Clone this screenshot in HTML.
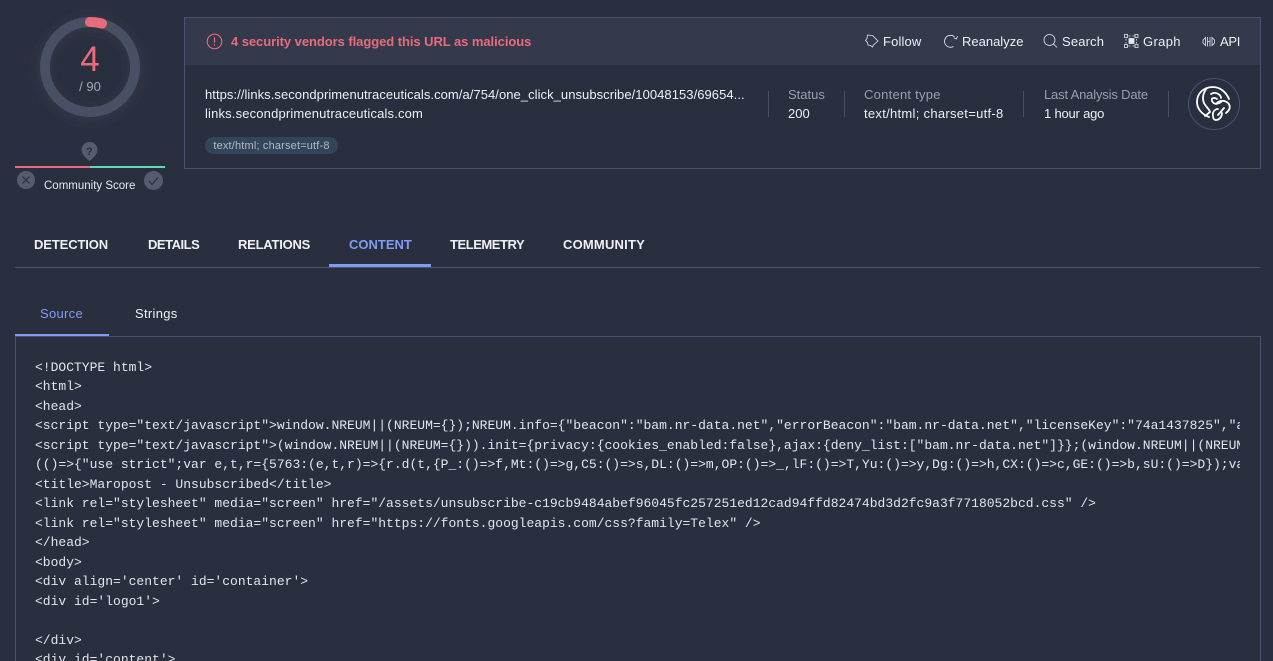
<!DOCTYPE html>
<html><head><meta charset="utf-8">
<style>
html,body{margin:0;padding:0;width:1273px;height:661px;overflow:hidden;background:#2a2f3f}
#w{position:relative;width:1273px;height:661px;overflow:hidden;background:#2a2f3f;font-family:"Liberation Sans",sans-serif;color:#f0f1f5}
.a{position:absolute;white-space:nowrap;line-height:16px}
svg{position:absolute;overflow:visible}
.code{position:absolute;left:35px;top:357.5px;width:1205px;height:304px;overflow:hidden;font:13px/19.5px "Liberation Mono",monospace;color:#e2e5eb;white-space:pre}
.tab{font-size:13px;font-weight:bold;top:237px;color:#eef0f4}
.act{font-size:13px;top:34px;color:#eef0f4}
.lab{font-size:13px;color:#9a9fae;top:87px}
.val{font-size:13px;color:#eef0f4;top:106px}
.div{position:absolute;top:91px;width:1px;height:26px;background:#4a5063}
</style></head><body><div id="w">
<!-- score -->
<svg style="left:0;top:0" width="200" height="200">
<defs><filter id="g" x="-30%" y="-30%" width="160%" height="160%"><feGaussianBlur stdDeviation="6"/></filter></defs>
<circle cx="90" cy="69" r="46" fill="none" stroke="#4a5063" stroke-opacity=".35" stroke-width="10" filter="url(#g)"/>
<circle cx="90" cy="67" r="45" fill="none" stroke="#4a5063" stroke-width="10"/>
<path d="M90 22 A45 45 0 0 1 102 23.500" fill="none" stroke="#e96b7c" stroke-width="10" stroke-linecap="round"/>
<path d="M89.500 142c-5 0-8 3.500-8 8 0 4 4 8 8 11 4-3 8-7 8-11 0-4.500-3-8-8-8z" fill="#565c6e"/>
<rect x="15" y="166" width="75" height="2" fill="#e96b7c"/><rect x="90" y="166" width="75" height="2" fill="#5fdcb4"/>
<circle cx="26" cy="180" r="9" fill="#565c6e"/><path d="M22.500 176.500l7 7m0-7l-7 7" stroke="#2a2f3f" stroke-width="1.200" fill="none"/>
<circle cx="153.500" cy="180.500" r="9.500" fill="#565c6e"/><path d="M149 181l3 3.500 6-7" stroke="#2a2f3f" stroke-width="1.200" fill="none"/>
</svg>
<div class="a" style="left:60px;top:40px;width:60px;text-align:center;font-size:35px;line-height:40px;color:#e96b7c">4</div>
<div class="a" style="left:60px;top:79px;width:60px;text-align:center;font-size:13px;color:#a5a9b6">/ 90</div>
<div class="a" style="left:86px;top:144px;font-size:11px;font-weight:bold;color:#2a2f3f">?</div>
<div class="a" style="left:44px;top:178px;font-size:11.500px;color:#e6e8ee">Community Score</div>
<!-- card -->
<div style="position:absolute;left:184px;top:17px;width:1075px;height:150px;border:1px solid #4b5272"></div>
<div style="position:absolute;left:185px;top:18px;width:1075px;height:47px;background:#343a4c"></div>
<svg style="left:206px;top:34px" width="17" height="17"><circle cx="8.500" cy="7.500" r="7.300" fill="none" stroke="#e96b7c" stroke-width="1.100"/><path d="M8.500 3.300v5.400M8.500 10.300v1.200" stroke="#e96b7c" stroke-width="1.200"/></svg>
<div class="a" style="left:231px;top:34px;font-size:13px;font-weight:bold;color:#e96b7c;letter-spacing:-.06px">4 security vendors flagged this URL as malicious</div>
<svg style="left:864px;top:33px" width="16" height="16" fill="none" stroke="#e6e8ee" stroke-width=".8"><path d="M3.500 2l5 .5 5.500 5.500-4.500 4-1 2-2-1.500-2.500-.5-.5-2.500-2-2 1.500-2z"/></svg>
<div class="a act" style="left:883px;letter-spacing:.15px">Follow</div>
<svg style="left:943px;top:33px" width="16" height="16" fill="none" stroke="#e6e8ee" stroke-width=".8"><path d="M10.500 13.500A6 6 0 1 1 11.500 3.800"/><path d="M14.500 3l-1 3-2.800-1.200"/></svg>
<div class="a act" style="left:962px">Reanalyze</div>
<svg style="left:1043px;top:33px" width="16" height="16" fill="none" stroke="#e6e8ee" stroke-width=".8"><circle cx="6.500" cy="7" r="5.500"/><path d="M10.500 11l3.500 3.500"/></svg>
<div class="a act" style="left:1062px;letter-spacing:.15px">Search</div>
<svg style="left:1124px;top:34px" width="16" height="16" fill="none" stroke="#e6e8ee" stroke-width=".8"><rect x=".5" y=".5" width="3" height="3"/><rect x="11" y=".5" width="3" height="3"/><rect x=".5" y="10.500" width="3" height="3"/><rect x="11" y="10.500" width="3" height="3"/><rect x="5" y="4.500" width="5" height="5" fill="#e6e8ee"/><path d="M4.500 2h2M8.500 2h2M4.500 12h2M8.500 12h2M2 5v1.500M2 8v1.500M12.500 5v1.500M12.500 8v1.500"/></svg>
<div class="a act" style="left:1143px;letter-spacing:.35px">Graph</div>
<svg style="left:1202px;top:36px" width="14" height="12" fill="none" stroke="#e6e8ee" stroke-width=".8"><path d="M3.500 1.500L1 4v3l2.500 2.500zM10 1.500L12.500 4v3L10 9.500zM5.500 1v9.500M8 1v9.500M5.500 5.500H8"/></svg>
<div class="a act" style="left:1220px;letter-spacing:-.3px">API</div>
<div class="a" style="left:205px;top:87px;font-size:13px;color:#eef0f4;letter-spacing:.055px">https://links.secondprimenutraceuticals.com/a/754/one_click_unsubscribe/10048153/69654...</div>
<div class="a" style="left:205px;top:106px;font-size:13px;color:#eef0f4;letter-spacing:.16px">links.secondprimenutraceuticals.com</div>
<div class="a" style="left:205px;top:137px;width:133px;height:17px;border-radius:9px;background:#33455a;font-size:11px;line-height:18px;text-align:center;color:#b4bac6;letter-spacing:.17px">text/html; charset=utf-8</div>
<div class="div" style="left:768px"></div><div class="div" style="left:844px"></div><div class="div" style="left:1023px"></div><div class="div" style="left:1168px"></div>
<div class="a lab" style="left:788px">Status</div><div class="a val" style="left:788px">200</div>
<div class="a lab" style="left:864px;letter-spacing:.25px">Content type</div><div class="a val" style="left:864px;letter-spacing:.29px">text/html; charset=utf-8</div>
<div class="a lab" style="left:1044px;letter-spacing:-.17px">Last Analysis Date</div><div class="a val" style="left:1044px;letter-spacing:-.2px">1 hour ago</div>
<svg style="left:1188px;top:78px" width="53" height="53" fill="none"><circle cx="26" cy="26" r="25.500" stroke="#4b5272"/>
<g stroke="#fff" stroke-width="1.800" stroke-linecap="round"><path d="M21 39C13 36 9 30 9 24C9 15 16 9 25 9C32 9 38 14 41 21"/><path d="M19 10C15 15 14 20 16 25C18 29 22 32 22 34L17 38"/><path d="M23 16C28 13 33 17 33 20M33 24C30 26 26 27 24 23C23 20 26 19 29 21"/><path d="M28 26C31 22 37 22 40 25C43 28 42 32 38 35"/><path d="M25 38C24 34 27 31 30 31M34 35C34 39 31 42 28 42C26 42 25 40 25 38"/><path d="M30 37L36 30"/></g></svg>
<!-- tabs -->
<div class="a tab" style="left:34px;letter-spacing:-.12px">DETECTION</div>
<div class="a tab" style="left:148px;letter-spacing:-.47px">DETAILS</div>
<div class="a tab" style="left:238px;letter-spacing:-.23px">RELATIONS</div>
<div class="a tab" style="left:349px;color:#7f9cf0">CONTENT</div>
<div class="a tab" style="left:450px;letter-spacing:-.45px">TELEMETRY</div>
<div class="a tab" style="left:563px;letter-spacing:.2px">COMMUNITY</div>
<div style="position:absolute;left:15px;top:267px;width:1245px;height:1px;background:#4b5272"></div>
<div style="position:absolute;left:329px;top:264px;width:102px;height:3px;background:#7f9cf0"></div>
<!-- subtabs -->
<div class="a" style="left:40px;top:306px;font-size:13px;color:#7f9cf0;letter-spacing:.3px">Source</div>
<div class="a" style="left:135px;top:306px;font-size:13px;color:#eef0f4;letter-spacing:.3px">Strings</div>
<div style="position:absolute;left:15px;top:336px;width:1244px;height:340px;border:1px solid #4b5272"></div>
<div style="position:absolute;left:15px;top:334px;width:94px;height:2px;background:#7f9cf0"></div>
<div class="code">&lt;!DOCTYPE html&gt;
&lt;html&gt;
&lt;head&gt;
&lt;script type="text/javascript"&gt;window.NREUM||(NREUM={});NREUM.info={"beacon":"bam.nr-data.net","errorBeacon":"bam.nr-data.net","licenseKey":"74a1437825","applicationID":"1"};
&lt;script type="text/javascript"&gt;(window.NREUM||(NREUM={})).init={privacy:{cookies_enabled:false},ajax:{deny_list:["bam.nr-data.net"]}};(window.NREUM||(NREUM={})).loader_config={};
(()=&gt;{"use strict";var e,t,r={5763:(e,t,r)=&gt;{r.d(t,{P_:()=&gt;f,Mt:()=&gt;g,C5:()=&gt;s,DL:()=&gt;m,OP:()=&gt;_,lF:()=&gt;T,Yu:()=&gt;y,Dg:()=&gt;h,CX:()=&gt;c,GE:()=&gt;b,sU:()=&gt;D});var n=r(632);
&lt;title&gt;Maropost - Unsubscribed&lt;/title&gt;
&lt;link rel="stylesheet" media="screen" href="/assets/unsubscribe-c19cb9484abef96045fc257251ed12cad94ffd82474bd3d2fc9a3f7718052bcd.css" /&gt;
&lt;link rel="stylesheet" media="screen" href="https://fonts.googleapis.com/css?family=Telex" /&gt;
&lt;/head&gt;
&lt;body&gt;
&lt;div align='center' id='container'&gt;
&lt;div id='logo1'&gt;

&lt;/div&gt;
&lt;div id='content'&gt;
</div>
</div></body></html>
